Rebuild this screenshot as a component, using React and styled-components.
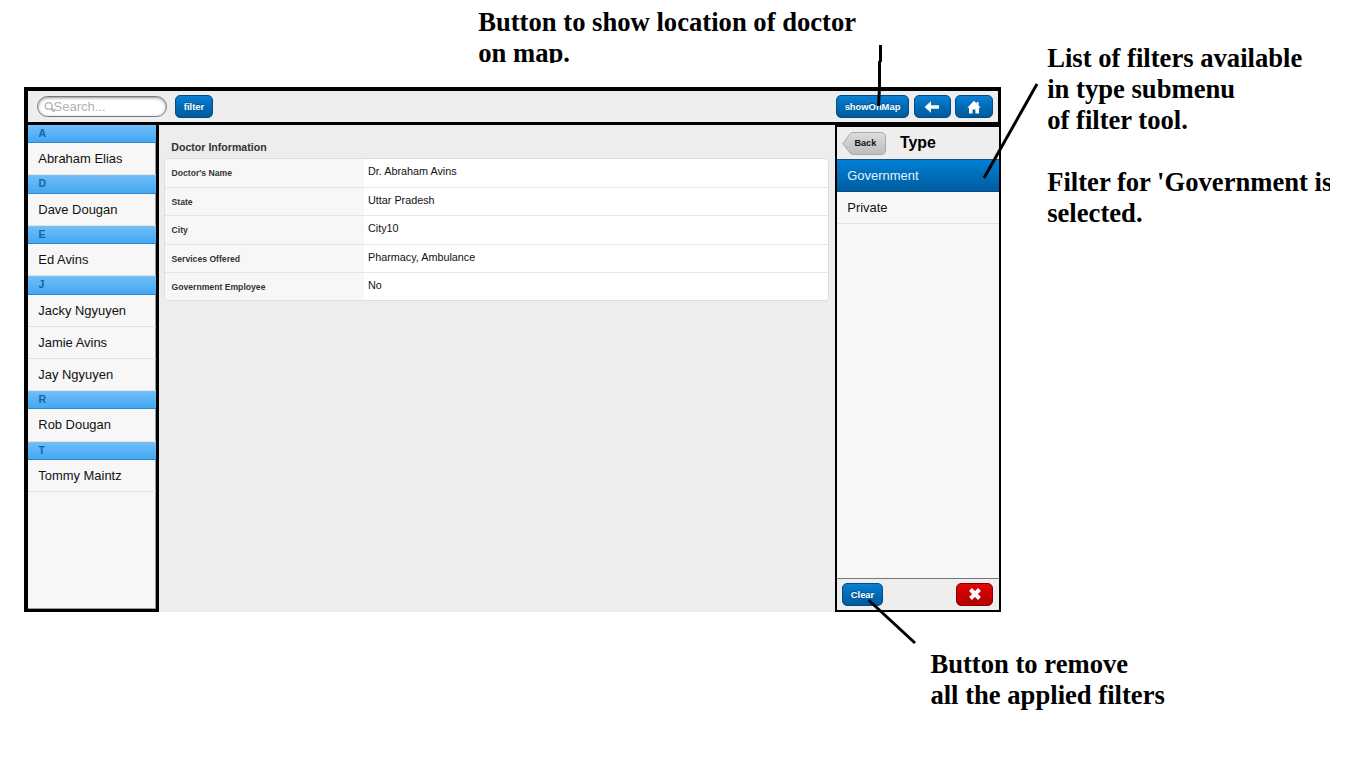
import React from "react";
import styled, { createGlobalStyle } from "styled-components";

const GlobalStyle = createGlobalStyle`
  * { box-sizing: border-box; }
  body { margin: 0; background: #fff; overflow: hidden; }
`;

const Page = styled.main`
  position: relative;
  width: 1366px;
  height: 768px;
  padding: 87px 0 0 24px;
  overflow: hidden;
  font-family: "Liberation Sans", Arial, sans-serif;
  color: #111;
`;

const Frame = styled.div`
  display: flex;
  flex-direction: column;
  width: 977px;
  height: 525px;
  background: #ededed;
`;

const Toolbar = styled.header`
  display: flex;
  align-items: center;
  height: 38px;
  flex: none;
  padding: 0 5px 0 8.5px;
  background: #eee;
  border: solid #000;
  border-width: 4px 3px 3px 4px;
`;

const SearchField = styled.label`
  display: flex;
  align-items: center;
  width: 130.5px;
  height: 21px;
  padding: 0 0 0 6px;
  border: 1px solid #777;
  border-radius: 11px;
  background: #fff;
  box-shadow: inset 0 1px 3px rgba(0, 0, 0, 0.45);
  font-size: 13px;
  color: #b0b0b0;

  svg { margin-right: -2px; }
`;

const Spacer = styled.div`
  flex: 1;
`;

const Button = styled.button`
  display: flex;
  align-items: center;
  justify-content: center;
  flex: none;
  width: ${(p) => p.$w}px;
  height: 23px;
  margin: 0 0 0 ${(p) => p.$gap || 0}px;
  padding: 0;
  border: 1px solid ${(p) => (p.$danger ? "#8c0000" : "#004d85")};
  border-radius: 5px;
  background: ${(p) =>
    p.$danger
      ? "linear-gradient(#e00a0a, #c80000 50%, #b00000)"
      : "linear-gradient(#0a80d2, #006bb8 50%, #005a9c)"};
  color: #fff;
  font: bold 9.4px "Liberation Sans", Arial, sans-serif;
  text-shadow: 0 -1px 0 rgba(0, 0, 0, 0.3);
  white-space: nowrap;
`;

const Body = styled.div`
  display: flex;
  flex: 1;
  min-height: 0;
`;

const Sidebar = styled.nav`
  width: 135px;
  flex: none;
  border: solid #000;
  border-width: 0 3px 3px 4px;
  background: #f7f7f7;
  box-shadow: inset -1px -1px 0 #999;
`;

const GroupHeader = styled.div`
  height: 18.25px;
  padding-left: 10.5px;
  border-top: 1px solid #74c0f8;
  border-bottom: 1px solid #2d89ce;
  background: linear-gradient(#6fbdf7, #43a8f2);
  color: #0c67a8;
  font-size: 10.5px;
  font-weight: bold;
  line-height: 15.6px;
`;

const ListItem = styled.div`
  height: 32.2px;
  padding-left: 10.3px;
  border-bottom: 1px solid ${(p) => (p.$selected ? "#00508a" : "#e2e2e2")};
  background: ${(p) => (p.$selected ? "linear-gradient(#0080d6, #005c9f)" : "transparent")};
  color: ${(p) => (p.$selected ? "#e4f3ff" : "#111")};
  font-size: 12.95px;
  line-height: 31.6px;
  white-space: nowrap;
`;

const Content = styled.section`
  flex: 1;
  padding: 14px 6px 0 5px;
  border-top: 3px solid #000;
  margin-top: -3px;
  background: #ededed;
`;

const FormTitle = styled.h2`
  margin: 0 0 0 7.3px;
  height: 19px;
  font-size: 10.6px;
  line-height: 17px;
  color: #333;
`;

const Form = styled.div`
  border: 1px solid #ddd;
  border-radius: 4px;
  overflow: hidden;
  background: #fff;
`;

const FormRow = styled.div`
  display: grid;
  grid-template-columns: 199px 1fr;
  height: 28.2px;

  & + & > * { border-top: 1px solid #e6e6e6; }
`;

const FieldLabel = styled.div`
  padding-left: 6.5px;
  background: #f7f7f7;
  color: #333;
  font-size: 8.65px;
  font-weight: bold;
  line-height: 29px;
`;

const FieldValue = styled.div`
  padding-left: 4px;
  font-size: 10.8px;
  line-height: 25px;
`;

const FilterPanel = styled.aside`
  display: flex;
  flex-direction: column;
  width: 166px;
  flex: none;
  border: 2px solid #000;
  background: #f7f7f7;
`;

const PanelHeader = styled.div`
  display: flex;
  align-items: center;
  height: 33px;
  padding-left: 4.5px;
  background: #eee;
  border-bottom: 1px solid #1b4f78;
`;

const BackButton = styled.div`
  position: relative;
  width: 44px;
  height: 23px;
  padding-left: 13px;
  font-size: 9.1px;
  font-weight: bold;
  line-height: 23px;

  svg { position: absolute; left: 0; top: 0; }
  span { position: relative; }
`;

const PanelTitle = styled.h1`
  margin: 0 0 0 14.5px;
  font-size: 15.9px;
  line-height: 20px;
  color: #000;
`;

const FilterList = styled.div`
  flex: 1;
`;

const PanelFooter = styled.div`
  display: flex;
  align-items: center;
  height: 32px;
  padding: 0 6px 1px 5px;
  border-top: 1px solid #777;
  background: #eee;
`;

const Note = styled.div`
  position: absolute;
  left: ${(p) => p.$x}px;
  top: ${(p) => p.$y}px;
  width: ${(p) => p.$w}px;
  height: ${(p) => p.$h}px;
  overflow: hidden;
  color: #000;
  font: bold 26.64px/31px "Liberation Serif", "Times New Roman", serif;
  white-space: pre;
`;

const Pointers = styled.svg`
  position: absolute;
  inset: 0;
  pointer-events: none;
`;

const SearchIcon = () => (
  <svg width="12" height="12" viewBox="0 0 12 12" fill="none" stroke="#b5b5b5">
    <circle cx="4.7" cy="5" r="3.4" strokeWidth="1.4" />
    <path d="M7.3 7.6L10.5 10.8" strokeWidth="2.2" />
  </svg>
);

const ArrowIcon = () => (
  <svg width="16" height="14" viewBox="0 0 16 14">
    <path d="M0.6 7L7 1.2V5.2H15V8.8H7V12.8Z" fill="#fff" />
  </svg>
);

const HomeIcon = () => (
  <svg width="14" height="14" viewBox="0 0 14 14">
    <path d="M7 .8L9.6 3.5V2H11.6V5.5L13.7 7.7H12V13.6H8.4V9.6H5.6V13.6H2V7.7H.3Z" fill="#fff" />
  </svg>
);

const CloseIcon = () => (
  <svg width="14" height="14" viewBox="0 0 14 14">
    <path d="M2.5 2.5L11.5 11.5M11.5 2.5L2.5 11.5" stroke="#fff" strokeWidth="4" />
  </svg>
);

const groups = [
  ["A", ["Abraham Elias"]],
  ["D", ["Dave Dougan"]],
  ["E", ["Ed Avins"]],
  ["J", ["Jacky Ngyuyen", "Jamie Avins", "Jay Ngyuyen"]],
  ["R", ["Rob Dougan"]],
  ["T", ["Tommy Maintz"]],
];

const fields = [
  ["Doctor's Name", "Dr. Abraham Avins"],
  ["State", "Uttar Pradesh"],
  ["City", "City10"],
  ["Services Offered", "Pharmacy, Ambulance"],
  ["Government Employee", "No"],
];

export default function App() {
  return (
    <Page>
      <GlobalStyle />
      <Frame>
        <Toolbar>
          <SearchField>
            <SearchIcon />
            Search...
          </SearchField>
          <Button $w={38} $gap={8}>filter</Button>
          <Spacer />
          <Button $w={73}>showOnMap</Button>
          <Button $w={37} $gap={4.5}><ArrowIcon /></Button>
          <Button $w={38} $gap={4.5}><HomeIcon /></Button>
        </Toolbar>
        <Body>
          <Sidebar>
            {groups.map(([letter, names]) => (
              <React.Fragment key={letter}>
                <GroupHeader>{letter}</GroupHeader>
                {names.map((name) => (
                  <ListItem key={name}>{name}</ListItem>
                ))}
              </React.Fragment>
            ))}
          </Sidebar>
          <Content>
            <FormTitle>Doctor Information</FormTitle>
            <Form>
              {fields.map(([label, value]) => (
                <FormRow key={label}>
                  <FieldLabel>{label}</FieldLabel>
                  <FieldValue>{value}</FieldValue>
                </FormRow>
              ))}
            </Form>
          </Content>
          <FilterPanel>
            <PanelHeader>
              <BackButton>
                <svg width="44" height="23" viewBox="0 0 44 23">
                  <defs>
                    <linearGradient id="back" x1="0" y1="0" x2="0" y2="1">
                      <stop offset="0" stopColor="#dcdcdc" />
                      <stop offset="1" stopColor="#bdbdbd" />
                    </linearGradient>
                  </defs>
                  <path
                    d="M11 .5H39Q43.5 .5 43.5 5V18Q43.5 22.5 39 22.5H11Q9.5 22.5 8 21L.7 11.5L8 2Q9.5 .5 11 .5Z"
                    fill="url(#back)"
                    stroke="#aaa"
                  />
                </svg>
                <span>Back</span>
              </BackButton>
              <PanelTitle>Type</PanelTitle>
            </PanelHeader>
            <FilterList>
              <ListItem $selected>Government</ListItem>
              <ListItem>Private</ListItem>
            </FilterList>
            <PanelFooter>
              <Button $w={41}>Clear</Button>
              <Spacer />
              <Button $w={37} $danger><CloseIcon /></Button>
            </PanelFooter>
          </FilterPanel>
        </Body>
      </Frame>

      <Note $x={478.2} $y={7} $w={400} $h={56}>{"Button to show location of doctor\non map."}</Note>
      <Note $x={1047.2} $y={43} $w={282.8} $h={200}>
        {"List of filters available\nin type submenu\nof filter tool.\n\nFilter for 'Government is\nselected."}
      </Note>
      <Note $x={930.4} $y={649} $w={260} $h={70}>{"Button to remove\nall the applied filters"}</Note>

      <Pointers width="1366" height="768" fill="none" stroke="#000" strokeWidth="3">
        <path d="M880.5 45V61L879.5 62V87L878.5 106" />
        <path d="M1037 84L984 178" />
        <path d="M868.5 600L915 643" />
      </Pointers>
    </Page>
  );
}
